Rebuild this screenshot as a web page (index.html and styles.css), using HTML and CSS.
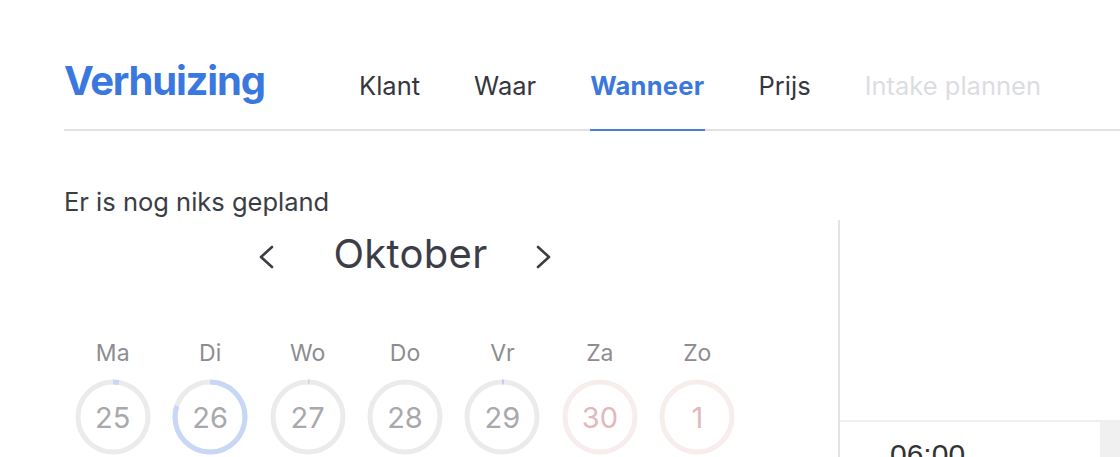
FILE: index.html
```html
<!DOCTYPE html>
<html lang="nl">
<head>
    <meta charset="UTF-8">
    <meta name="viewport" content="width=device-width, initial-scale=1.0">
    <title>Verhuizing</title>
    <link rel="stylesheet" href="styles.css">
</head>
<body>
    <div class="page">
        <header class="top">
            <h1 class="title">Verhuizing</h1>
            <nav class="tabs">
                <a class="tab">Klant</a>
                <a class="tab">Waar</a>
                <a class="tab active">Wanneer</a>
                <a class="tab">Prijs</a>
                <a class="tab disabled">Intake plannen</a>
            </nav>
        </header>

        <p class="status">Er is nog niks gepland</p>

        <div class="planner">
            <section class="calendar">
                <div class="month">
                    <button class="arrow prev">
                        <svg width="16" height="24" viewBox="0 0 16 24"><polyline points="14,2 3,12 14,22"/></svg>
                    </button>
                    <span class="month-name">Oktober</span>
                    <button class="arrow next">
                        <svg width="16" height="24" viewBox="0 0 16 24"><polyline points="2,2 13,12 2,22"/></svg>
                    </button>
                </div>

                <div class="week">
                    <div class="day">
                        <span class="label">Ma</span>
                        <div class="ring">
                            <svg width="76" height="76" viewBox="0 0 76 76"><circle class="track" cx="38" cy="38" r="35"/><circle class="fill" cx="38" cy="38" r="35" style="stroke-dasharray: 6 300"/></svg>
                            <span class="num">25</span>
                        </div>
                    </div>
                    <div class="day">
                        <span class="label">Di</span>
                        <div class="ring">
                            <svg width="76" height="76" viewBox="0 0 76 76"><circle class="track" cx="38" cy="38" r="35"/><circle class="fill" cx="38" cy="38" r="35" style="stroke-dasharray: 176 300"/></svg>
                            <span class="num">26</span>
                        </div>
                    </div>
                    <div class="day">
                        <span class="label">Wo</span>
                        <div class="ring">
                            <svg width="76" height="76" viewBox="0 0 76 76"><circle class="track" cx="38" cy="38" r="35"/><circle class="fill grey" cx="38" cy="38" r="35" style="stroke-dasharray: 1.5 300"/></svg>
                            <span class="num">27</span>
                        </div>
                    </div>
                    <div class="day">
                        <span class="label">Do</span>
                        <div class="ring">
                            <svg width="76" height="76" viewBox="0 0 76 76"><circle class="track" cx="38" cy="38" r="35"/></svg>
                            <span class="num">28</span>
                        </div>
                    </div>
                    <div class="day">
                        <span class="label">Vr</span>
                        <div class="ring">
                            <svg width="76" height="76" viewBox="0 0 76 76"><circle class="track" cx="38" cy="38" r="35"/><circle class="fill violet" cx="38" cy="38" r="35" style="stroke-dasharray: 2 300"/></svg>
                            <span class="num">29</span>
                        </div>
                    </div>
                    <div class="day weekend">
                        <span class="label">Za</span>
                        <div class="ring">
                            <svg width="76" height="76" viewBox="0 0 76 76"><circle class="track" cx="38" cy="38" r="35"/></svg>
                            <span class="num">30</span>
                        </div>
                    </div>
                    <div class="day weekend">
                        <span class="label">Zo</span>
                        <div class="ring">
                            <svg width="76" height="76" viewBox="0 0 76 76"><circle class="track" cx="38" cy="38" r="35"/></svg>
                            <span class="num">1</span>
                        </div>
                    </div>
                </div>
            </section>

            <aside class="slots">
                <div class="slots-head"></div>
                <div class="slot-row">
                    <div class="slot">06:00</div>
                    <div class="slot-side"></div>
                </div>
            </aside>
        </div>
    </div>
</body>
</html>
```

FILE: styles.css
```css
body {
    margin: 0;
    font-family: Inter, "Noto Sans", sans-serif;
    background-color: #ffffff;
    color: #35363e;
    overflow: hidden;
}
.page {
    padding-left: 64px;
}
.top {
    display: flex;
    align-items: flex-end;
    height: 129px;
    border-bottom: 2px solid #e2e2e5;
}
.title {
    flex: 0 0 295px;
    margin: 0 0 23px;
    font-size: 40px;
    line-height: 50px;
    font-weight: 700;
    color: #3a77df;
    letter-spacing: -1.2px;
}
.tabs {
    display: flex;
    gap: 54px;
}
.tab {
    font-size: 25.5px;
    line-height: 32px;
    padding-bottom: 27px;
    margin-bottom: -2px;
    border-bottom: 2px solid transparent;
    color: #35363e;
}
.tab.active {
    font-weight: 700;
    letter-spacing: 0.3px;
    color: #3b77dd;
    border-bottom-color: #4a7fd8;
}
.tab.disabled {
    color: #dcdde1;
}
.status {
    margin: 56px 0 3px;
    font-size: 25.5px;
    line-height: 30px;
    color: #3b3d45;
}
.planner {
    display: flex;
    height: 237px;
}
.calendar {
    flex: 0 0 774px;
}
.month {
    display: flex;
    align-items: center;
    justify-content: center;
    width: 682px;
    height: 44px;
    margin-top: 12px;
}
.arrow {
    padding: 0;
    border: none;
    background: none;
    display: flex;
    margin-top: 5px;
}
.arrow polyline {
    fill: none;
    stroke: #3d3d48;
    stroke-width: 2.6;
    stroke-linecap: round;
    stroke-linejoin: round;
}
.prev {
    margin-right: 59px;
}
.next {
    margin-left: 48px;
}
.month-name {
    font-size: 40px;
    line-height: 44px;
    letter-spacing: 0.3px;
    color: #3d3d48;
}
.week {
    display: grid;
    grid-template-columns: repeat(7, 1fr);
    width: 682px;
    margin-top: 63px;
}
.day {
    display: flex;
    flex-direction: column;
    align-items: center;
    gap: 12px;
}
.label {
    font-size: 23px;
    line-height: 28px;
    color: #8d8d91;
}
.ring {
    position: relative;
    width: 76px;
    height: 76px;
}
.ring svg {
    transform: rotate(-90deg);
}
.ring circle {
    fill: none;
    stroke-width: 5;
}
.track {
    stroke: #ebebec;
}
.fill {
    stroke: #c7d7f5;
}
.fill.grey {
    stroke: #d4d4d6;
}
.fill.violet {
    stroke: #c9c9ec;
}
.num {
    position: absolute;
    inset: 0;
    display: flex;
    align-items: center;
    justify-content: center;
    font-size: 29px;
    color: #a9a9ad;
}
.weekend .track {
    stroke: #f8eded;
}
.weekend .num {
    color: #e2b8bc;
}
.slots {
    flex: 1;
    border-left: 2px solid #e4e4e6;
}
.slots-head {
    height: 200px;
    border-bottom: 2px solid #efefef;
}
.slot-row {
    display: flex;
    height: 35px;
}
.slot {
    flex: 0 0 210px;
    padding: 15px 0 0 50px;
    font-family: "Liberation Sans", Arial, sans-serif;
    font-size: 30px;
    line-height: 36px;
    color: #333333;
}
.slot-side {
    flex: 1;
    background-color: #f0f0f0;
}
```
